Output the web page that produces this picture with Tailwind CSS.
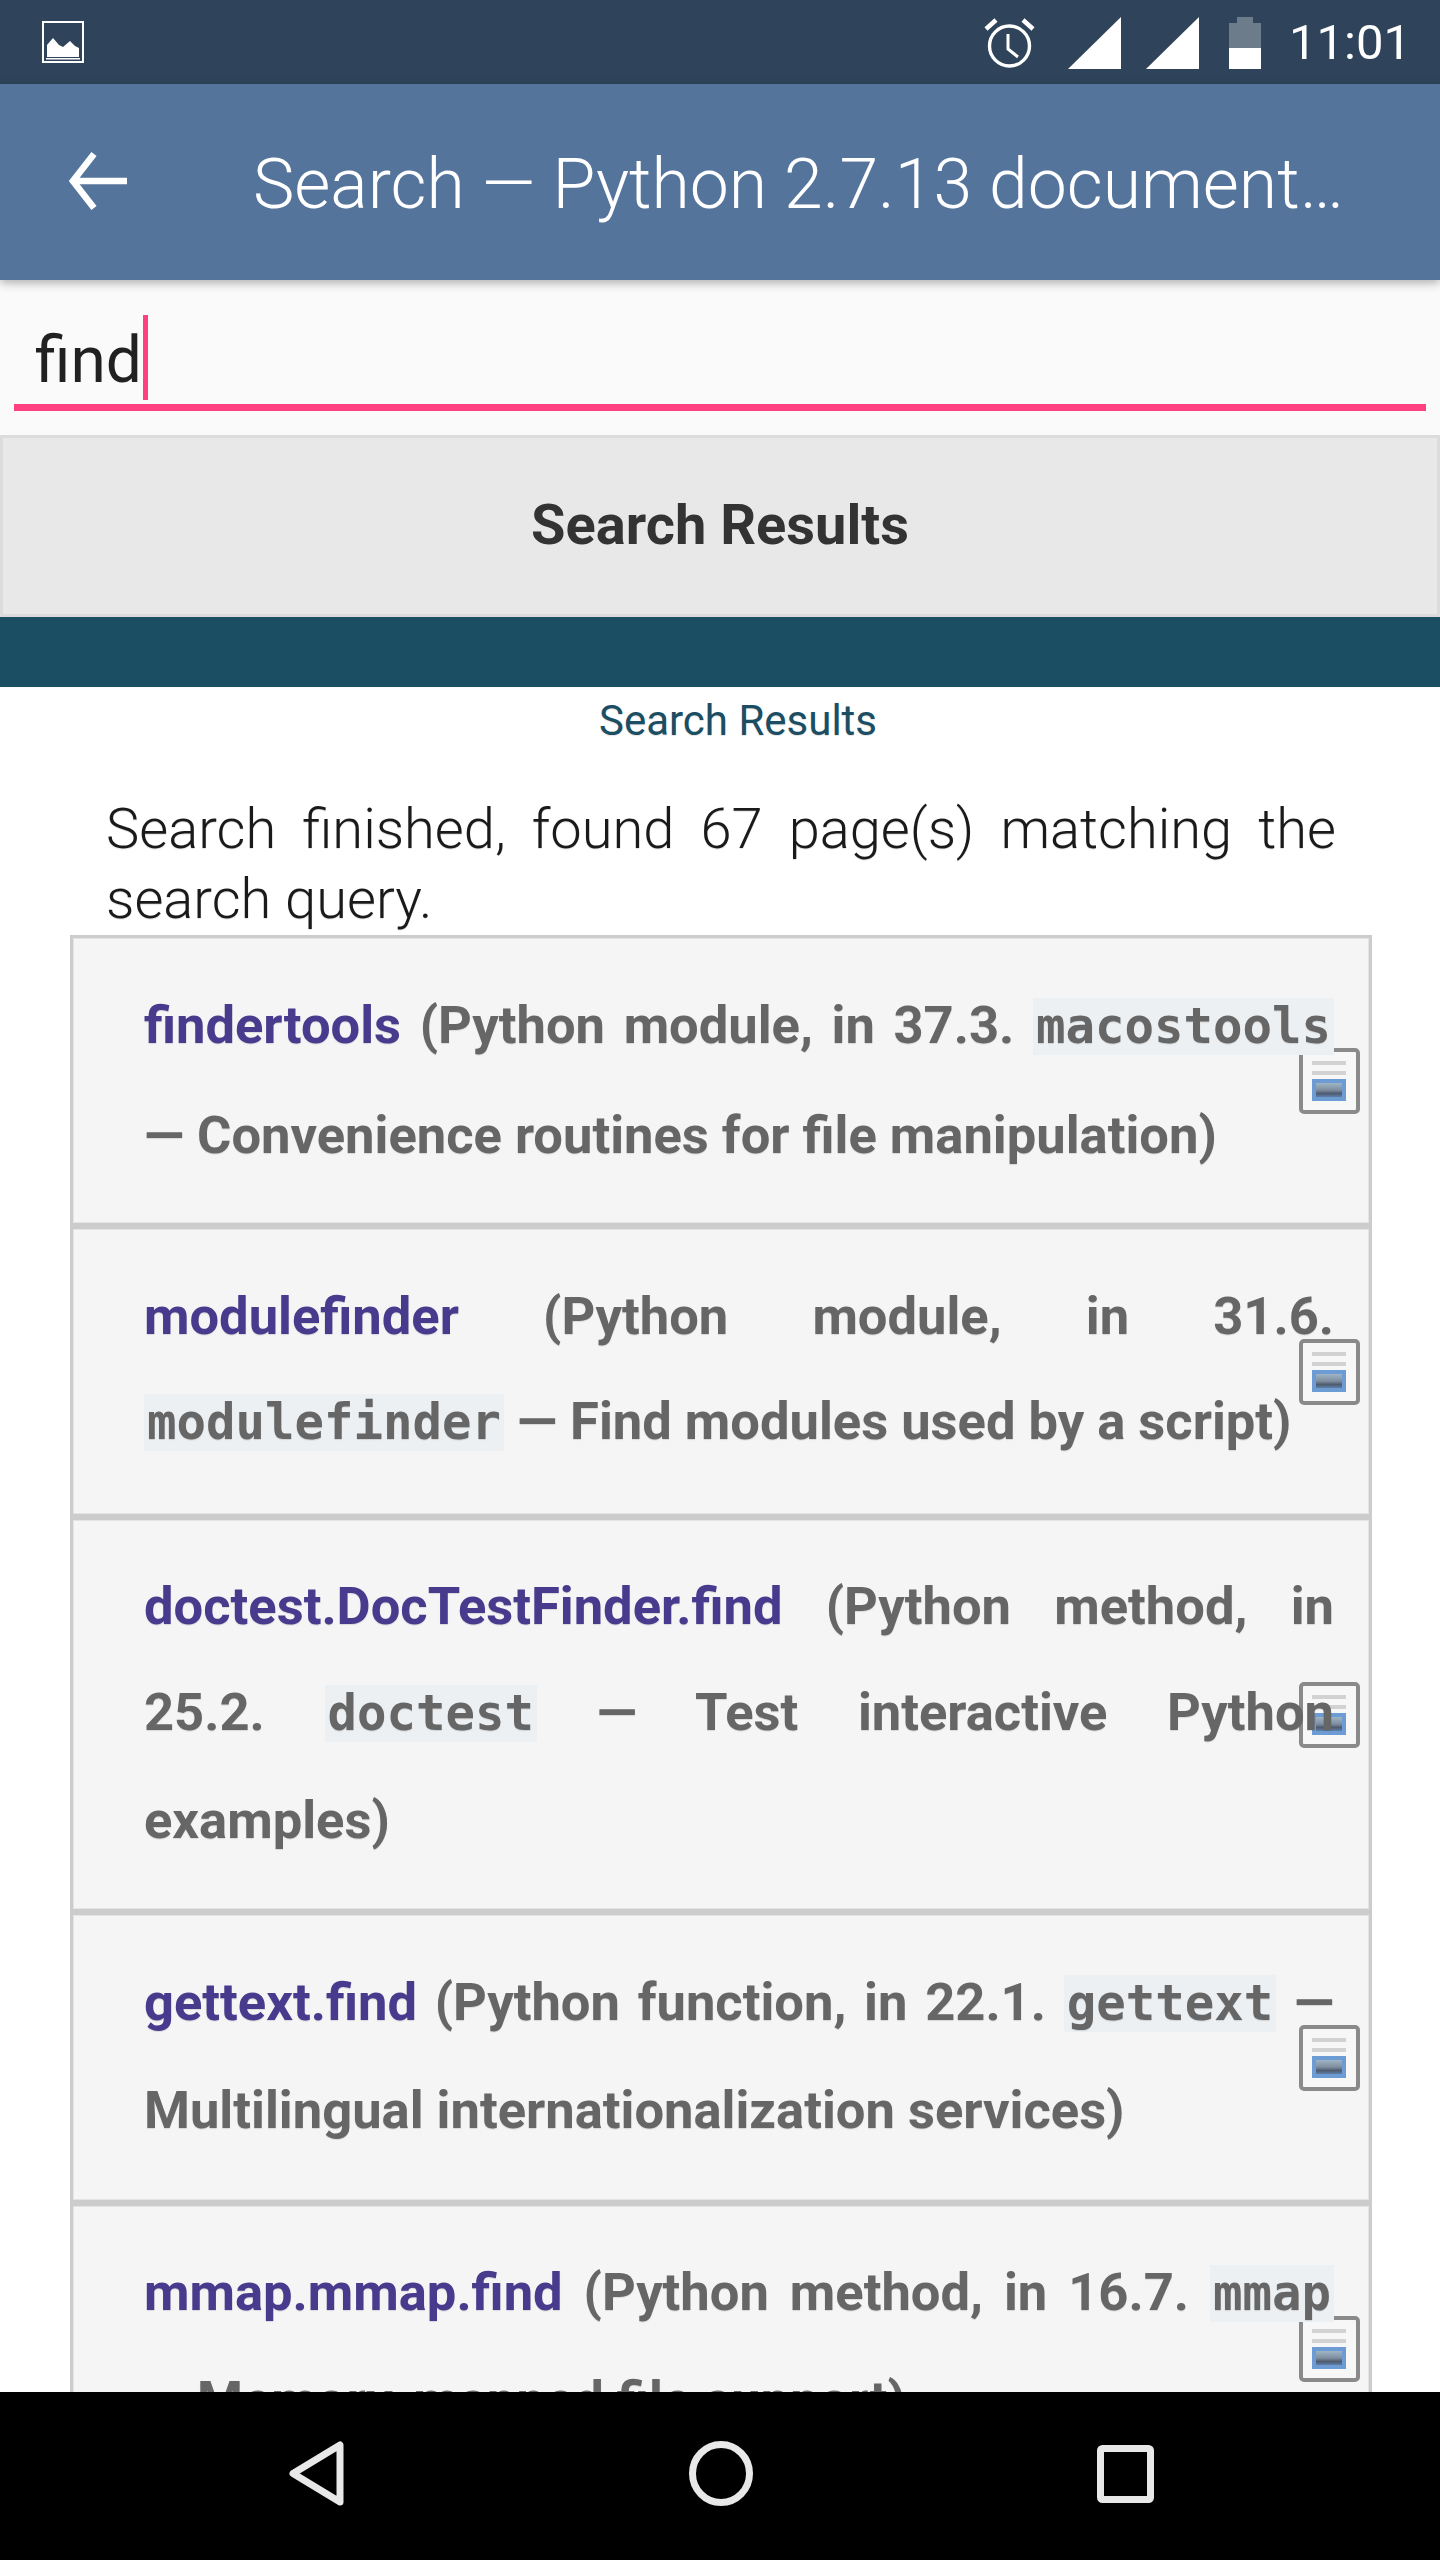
<!DOCTYPE html>
<html><head><meta charset="utf-8">
<script src="https://cdn.jsdelivr.net/npm/@tailwindcss/browser@4"></script>
</head>
<body class="bg-white">
<div class="flex flex-col h-[2560px] w-[1440px] overflow-hidden font-['Roboto',sans-serif] bg-white">
  <!-- status bar -->
  <div class="h-[84px] shrink-0 bg-[#2f445a] flex items-center text-white">
    <svg class="ml-[42px] w-[42px] h-[42px]" viewBox="0 0 42 42"><rect x="1" y="1" width="40" height="40" fill="none" stroke="#fff" stroke-width="2"/><path d="M5 33V21l6-7 6 7 4 2 7-6 5 5 4 2v9z" fill="#fff" transform="translate(0 3)"/><rect x="4" y="37" width="34" height="1.5" fill="#fff"/></svg>
    <div class="ml-auto mt-[1px] flex items-center">
      <svg class="w-[51px] h-[50px]" viewBox="0 0 51 50"><circle cx="25.5" cy="28" r="20" fill="none" stroke="#fff" stroke-width="3.4"/><path d="M24 16v15l10 8" fill="none" stroke="#fff" stroke-width="3"/><path d="M2 11 12 2M49 11 39 2" stroke="#fff" stroke-width="4.5"/></svg>
      <svg class="ml-[33px] w-[53px] h-[52px]" viewBox="0 0 53 52"><path d="M53 0V52H0z" fill="#fff"/></svg>
      <svg class="ml-[25px] w-[53px] h-[52px]" viewBox="0 0 53 52"><path d="M53 0V52H0z" fill="#fff"/></svg>
      <svg class="ml-[30px] w-[32px] h-[52px]" viewBox="0 0 32 52"><path d="M8 0h16v6h8v25H0V6h8z" fill="#fff" fill-opacity=".3"/><rect y="31" width="32" height="21" fill="#fff"/></svg>
      <span class="ml-[28px] mr-[29px] text-[49px] leading-none font-normal">11:01</span>
    </div>
  </div>
  <!-- app bar -->
  <div class="relative z-10 h-[196px] shrink-0 bg-[#54749c] flex items-center text-white shadow-[0_3px_9px_rgba(0,0,0,0.3)]">
    <svg class="ml-[69px] mt-[-2px] w-[58px] h-[58px]" viewBox="0 0 58 58"><path d="M4 29H58M25 2 4 29l21 27" fill="none" stroke="#fff" stroke-width="6.5"/></svg>
    <span class="ml-[126px] mt-[5px] text-[69.7px] font-light leading-none whitespace-nowrap">Search — Python 2.7.13 document…</span>
  </div>
  <!-- search -->
  <div class="h-[155px] shrink-0 bg-[#fafafa] relative">
    <div class="absolute left-[35px] top-[34px] flex items-center h-[86px]">
      <span class="text-[64px] mt-[8px] leading-none text-[#212121]">find</span>
      <span class="ml-[1px] w-[5px] h-[85px] bg-[#ff4081]"></span>
    </div>
    <div class="absolute left-[14px] right-[14px] top-[124px] h-[7px] bg-[#ff4081]"></div>
  </div>
  <!-- button -->
  <div class="h-[182px] shrink-0 bg-[#e8e8e8] border-[3px] border-[#dcdcdc] flex items-center justify-center pb-[2px] text-[56px] font-bold text-[#333]">Search Results</div>
  <div class="h-[70px] shrink-0 bg-[#1c4e63]"></div>
  <!-- content -->
  <div class="flex-1 overflow-hidden [text-shadow:0_1px_1px_rgba(0,0,0,0.12)]">
    <div class="pl-[36px] h-[66px] flex items-center justify-center text-[42px] text-[#1c4e63]">Search Results</div>
    <p class="mt-[41px] pl-[106px] pr-[104px] text-[56px] font-light leading-[70px] text-[#1a1a1a] text-justify">Search finished, found 67 page(s) matching the search query.</p>
    <div class="ml-[70px] w-[1302px] mt-[1px] flex flex-col">

      <div class="relative h-[291px] bg-[#f5f5f5] border-[3px] border-[#cccccc] shadow-[inset_0_0_0_1px_#e4e4e4]">
        <svg class="absolute right-[9px] top-1/2 -translate-y-1/2 w-[61px] h-[66px] blur-[0.6px]" viewBox="0 0 61 66"><defs><linearGradient id="g" x1="0" y1="0" x2="0" y2="1"><stop offset="0" stop-color="#9fb5c4"/><stop offset=".5" stop-color="#7f8ea0"/><stop offset=".75" stop-color="#4f5c70"/><stop offset="1" stop-color="#5f7fa8"/></linearGradient></defs><rect x="2" y="2" width="57" height="62" rx="3" fill="#f7f7f7" stroke="#8a8a8a" stroke-width="4"/><rect x="13" y="13" width="34" height="4" fill="#d2d2d2"/><rect x="13" y="23" width="34" height="4" fill="#d2d2d2"/><rect x="13" y="31" width="34" height="22" fill="#6d9bd4"/><rect x="17" y="35" width="26" height="14" fill="url(#g)"/></svg>
        <p class="relative pt-[33px] pl-[71px] pr-[35px] text-[52.5px] font-bold leading-[108px] text-[#666] text-justify"><span class="text-[#483a8d]">findertools</span> (Python module, in 37.3. <code class="font-['DejaVu_Sans_Mono',monospace] text-[49px] font-bold bg-[#ecf0f3] px-[3px]">macostools</code> — Convenience routines for file manipulation)</p>
      </div>

      <div class="relative h-[291px] bg-[#f5f5f5] border-[3px] border-[#cccccc] shadow-[inset_0_0_0_1px_#e4e4e4]">
        <svg class="absolute right-[9px] top-1/2 -translate-y-1/2 w-[61px] h-[66px] blur-[0.6px]" viewBox="0 0 61 66"><rect x="2" y="2" width="57" height="62" rx="3" fill="#f7f7f7" stroke="#8a8a8a" stroke-width="4"/><rect x="13" y="13" width="34" height="4" fill="#d2d2d2"/><rect x="13" y="23" width="34" height="4" fill="#d2d2d2"/><rect x="13" y="31" width="34" height="22" fill="#6d9bd4"/><rect x="17" y="35" width="26" height="14" fill="url(#g)"/></svg>
        <p class="relative pt-[35px] pl-[71px] pr-[35px] text-[52.5px] font-bold leading-[105px] text-[#666] text-justify"><span class="text-[#483a8d]">modulefinder</span> (Python module, in 31.6. <code class="font-['DejaVu_Sans_Mono',monospace] text-[49px] font-bold bg-[#ecf0f3] px-[3px]">modulefinder</code> — Find modules used by a script)</p>
      </div>

      <div class="relative h-[395px] bg-[#f5f5f5] border-[3px] border-[#cccccc] shadow-[inset_0_0_0_1px_#e4e4e4]">
        <svg class="absolute right-[9px] top-1/2 -translate-y-1/2 w-[61px] h-[66px] blur-[0.6px]" viewBox="0 0 61 66"><rect x="2" y="2" width="57" height="62" rx="3" fill="#f7f7f7" stroke="#8a8a8a" stroke-width="4"/><rect x="13" y="13" width="34" height="4" fill="#d2d2d2"/><rect x="13" y="23" width="34" height="4" fill="#d2d2d2"/><rect x="13" y="31" width="34" height="22" fill="#6d9bd4"/><rect x="17" y="35" width="26" height="14" fill="url(#g)"/></svg>
        <p class="relative pt-[33px] pl-[71px] pr-[35px] text-[52.5px] font-bold leading-[106px] text-[#666] text-justify"><span class="text-[#483a8d]">doctest.DocTestFinder.find</span> (Python method, in 25.2. <code class="font-['DejaVu_Sans_Mono',monospace] text-[49px] font-bold bg-[#ecf0f3] px-[3px]">doctest</code> — Test interactive Python examples)</p>
      </div>

      <div class="relative h-[291px] bg-[#f5f5f5] border-[3px] border-[#cccccc] shadow-[inset_0_0_0_1px_#e4e4e4]">
        <svg class="absolute right-[9px] top-1/2 -translate-y-1/2 w-[61px] h-[66px] blur-[0.6px]" viewBox="0 0 61 66"><rect x="2" y="2" width="57" height="62" rx="3" fill="#f7f7f7" stroke="#8a8a8a" stroke-width="4"/><rect x="13" y="13" width="34" height="4" fill="#d2d2d2"/><rect x="13" y="23" width="34" height="4" fill="#d2d2d2"/><rect x="13" y="31" width="34" height="22" fill="#6d9bd4"/><rect x="17" y="35" width="26" height="14" fill="url(#g)"/></svg>
        <p class="relative pt-[34px] pl-[71px] pr-[35px] text-[52.5px] font-bold leading-[107px] text-[#666] text-justify"><span class="text-[#483a8d]">gettext.find</span> (Python function, in 22.1. <code class="font-['DejaVu_Sans_Mono',monospace] text-[49px] font-bold bg-[#ecf0f3] px-[3px]">gettext</code> — Multilingual internationalization services)</p>
      </div>

      <div class="relative h-[291px] bg-[#f5f5f5] border-[3px] border-[#cccccc] shadow-[inset_0_0_0_1px_#e4e4e4]">
        <svg class="absolute right-[9px] top-1/2 -translate-y-1/2 w-[61px] h-[66px] blur-[0.6px]" viewBox="0 0 61 66"><rect x="2" y="2" width="57" height="62" rx="3" fill="#f7f7f7" stroke="#8a8a8a" stroke-width="4"/><rect x="13" y="13" width="34" height="4" fill="#d2d2d2"/><rect x="13" y="23" width="34" height="4" fill="#d2d2d2"/><rect x="13" y="31" width="34" height="22" fill="#6d9bd4"/><rect x="17" y="35" width="26" height="14" fill="url(#g)"/></svg>
        <p class="relative pt-[33px] pl-[71px] pr-[35px] text-[52.5px] font-bold leading-[107px] text-[#666] text-justify"><span class="text-[#483a8d]">mmap.mmap.find</span> (Python method, in 16.7. <code class="font-['DejaVu_Sans_Mono',monospace] text-[49px] font-bold bg-[#ecf0f3] px-[3px]">mmap</code> — Memory-mapped file support)</p>
      </div>
    </div>
  </div>
  <!-- nav -->
  <div class="relative z-10 h-[168px] shrink-0 bg-black flex items-center">
    <svg class="ml-[289px] mt-[-5px] w-[55px] h-[65px]" viewBox="0 0 55 65"><path d="M51 4V61L4 32.500z" fill="none" stroke="#e8e8e8" stroke-width="7" stroke-linejoin="round"/></svg>
    <svg class="ml-[345px] mt-[-5px] w-[64px] h-[65px]" viewBox="0 0 64 65"><ellipse cx="32" cy="32.500" rx="28.500" ry="29" fill="none" stroke="#e8e8e8" stroke-width="7"/></svg>
    <svg class="ml-[344px] mt-[-5px] w-[57px] h-[58px]" viewBox="0 0 57 58"><rect x="3.500" y="3.500" width="50" height="51" rx="2" fill="none" stroke="#e8e8e8" stroke-width="7"/></svg>
  </div>
</div>
</body></html>
